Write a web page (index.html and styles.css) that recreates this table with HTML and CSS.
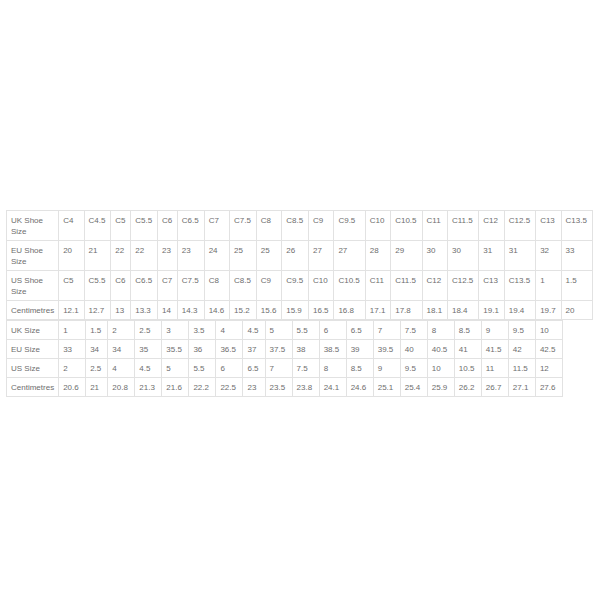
FILE: index.html
```html
<!DOCTYPE html>
<html>
<head>
<meta charset="utf-8">
<link rel="stylesheet" href="styles.css">
</head>
<body>
<div class="wrap">
<table class="sizes sizes-kids">
<tr><td class="label">UK Shoe Size</td><td>C4</td><td>C4.5</td><td>C5</td><td>C5.5</td><td>C6</td><td>C6.5</td><td>C7</td><td>C7.5</td><td>C8</td><td>C8.5</td><td>C9</td><td>C9.5</td><td>C10</td><td>C10.5</td><td>C11</td><td>C11.5</td><td>C12</td><td>C12.5</td><td>C13</td><td>C13.5</td></tr>
<tr><td class="label">EU Shoe Size</td><td>20</td><td>21</td><td>22</td><td>22</td><td>23</td><td>23</td><td>24</td><td>25</td><td>25</td><td>26</td><td>27</td><td>27</td><td>28</td><td>29</td><td>30</td><td>30</td><td>31</td><td>31</td><td>32</td><td>33</td></tr>
<tr><td class="label">US Shoe Size</td><td>C5</td><td>C5.5</td><td>C6</td><td>C6.5</td><td>C7</td><td>C7.5</td><td>C8</td><td>C8.5</td><td>C9</td><td>C9.5</td><td>C10</td><td>C10.5</td><td>C11</td><td>C11.5</td><td>C12</td><td>C12.5</td><td>C13</td><td>C13.5</td><td>1</td><td>1.5</td></tr>
<tr><td class="label">Centimetres</td><td>12.1</td><td>12.7</td><td>13</td><td>13.3</td><td>14</td><td>14.3</td><td>14.6</td><td>15.2</td><td>15.6</td><td>15.9</td><td>16.5</td><td>16.8</td><td>17.1</td><td>17.8</td><td>18.1</td><td>18.4</td><td>19.1</td><td>19.4</td><td>19.7</td><td>20</td></tr>
</table>
<table class="sizes sizes-adult">
<tr><td class="label">UK Size</td><td>1</td><td>1.5</td><td>2</td><td>2.5</td><td>3</td><td>3.5</td><td>4</td><td>4.5</td><td>5</td><td>5.5</td><td>6</td><td>6.5</td><td>7</td><td>7.5</td><td>8</td><td>8.5</td><td>9</td><td>9.5</td><td>10</td></tr>
<tr><td class="label">EU Size</td><td>33</td><td>34</td><td>34</td><td>35</td><td>35.5</td><td>36</td><td>36.5</td><td>37</td><td>37.5</td><td>38</td><td>38.5</td><td>39</td><td>39.5</td><td>40</td><td>40.5</td><td>41</td><td>41.5</td><td>42</td><td>42.5</td></tr>
<tr><td class="label">US Size</td><td>2</td><td>2.5</td><td>4</td><td>4.5</td><td>5</td><td>5.5</td><td>6</td><td>6.5</td><td>7</td><td>7.5</td><td>8</td><td>8.5</td><td>9</td><td>9.5</td><td>10</td><td>10.5</td><td>11</td><td>11.5</td><td>12</td></tr>
<tr><td class="label">Centimetres</td><td>20.6</td><td>21</td><td>20.8</td><td>21.3</td><td>21.6</td><td>22.2</td><td>22.5</td><td>23</td><td>23.5</td><td>23.8</td><td>24.1</td><td>24.6</td><td>25.1</td><td>25.4</td><td>25.9</td><td>26.2</td><td>26.7</td><td>27.1</td><td>27.6</td></tr>
</table>
</div>
</body>
</html>
```
FILE: styles.css
```css
html, body {
  margin: 0;
  padding: 0;
  background: #ffffff;
}
body {
  font-family: "Liberation Sans", Arial, sans-serif;
  font-size: 8px;
  line-height: 11px;
  color: #6e6e6e;
}
.wrap {
  padding: 210px 0 0 6px;
}
.sizes {
  border-collapse: collapse;
  table-layout: auto;
}
.sizes-kids {
  width: 587px;
}
.sizes-adult {
  width: 557px;
}
.sizes td {
  border: 1px solid #e2e2e2;
  padding: 4px 4px 3px;
  vertical-align: top;
  text-align: left;
  white-space: nowrap;
}
.sizes td.label {
  width: 43px;
  white-space: normal;
}
.sizes-adult td.label {
  white-space: nowrap;
}
```
